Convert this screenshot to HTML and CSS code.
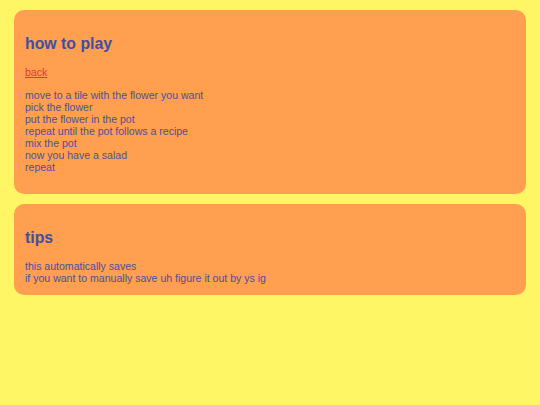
FILE: index.html
```html
<!DOCTYPE html>
<html>
<head>
<meta charset="utf-8">
<title>how to play</title>
<link rel="stylesheet" href="styles.css">
</head>
<body>
<section class="card">
  <h2 class="title">how to play</h2>
  <p class="nav"><a class="back" href="#">back</a></p>
  <p class="text">move to a tile with the flower you want<br>pick the flower<br>put the flower in the pot<br>repeat until the pot follows a recipe<br>mix the pot<br>now you have a salad<br>repeat</p>
</section>
<section class="card card-tips">
  <h2 class="title">tips</h2>
  <p class="text text-last">this automatically saves<br>if you want to manually save uh figure it out by ys ig</p>
</section>
</body>
</html>
```
FILE: styles.css
```css
html {
  background: #fff666;
}
body {
  margin: 10px 14px;
  font-family: "Liberation Sans", Arial, sans-serif;
  font-size: 10.56px;
  color: #4c4f9c;
  display: flex;
  flex-direction: column;
  gap: 10px;
}
.card {
  background: #ff9f4f;
  border-radius: 10px;
  padding: 12px 11px 11px;
}
.card-tips {
  padding-bottom: 10.5px;
}
.title {
  font-size: 15.84px;
  font-weight: bold;
  color: #3d4fa3;
  margin: 13px 0;
}
.nav {
  margin: 10.5px 0;
}
.back {
  color: #e0344a;
}
.text {
  margin: 10.5px 0;
}
.text-last {
  margin-bottom: 0;
}
```
